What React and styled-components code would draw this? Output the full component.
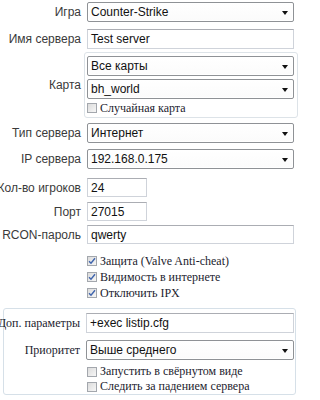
import React from 'react';
import styled, { createGlobalStyle } from 'styled-components';

const GlobalStyle = createGlobalStyle`
  html, body {
    margin: 0;
    padding: 0;
    background: #ffffff;
  }
  body {
    font-family: 'Liberation Sans', Arial, sans-serif;
    font-size: 12px;
    color: #222;
    overflow: hidden;
  }
`;

const Page = styled.div`
  width: 302px;
  height: 400px;
  padding-top: 2px;
  box-sizing: border-box;
  background: #fff;
`;

const Row = styled.div`
  display: grid;
  grid-template-columns: ${(p) => p.$labelWidth || 81}px 1fr;
  column-gap: 6px;
  padding-right: ${(p) => (p.$inset ? 0 : 8)}px;
  margin-top: ${(p) => p.$gap || 0}px;
  min-height: ${(p) => p.$height || 0}px;
`;

const Label = styled.div`
  display: flex;
  justify-content: flex-end;
  align-items: center;
  white-space: nowrap;
  color: ${(p) => (p.$serif ? '#1c1c2e' : '#3a3a3a')};
  font-family: ${(p) =>
    p.$serif ? "'Liberation Serif', 'Times New Roman', serif" : "'Liberation Sans', Arial, sans-serif"};
  font-size: 12px;
`;

const Combo = styled.div`
  position: relative;
  height: 20px;
  box-sizing: border-box;
  border: 1px solid #8f9296;
  border-radius: 2px;
  background: linear-gradient(#ffffff, #fbfbfb);
  box-shadow: inset 0 0 0 1px #fff;
  display: flex;
  align-items: center;
  padding-left: 3px;
  color: #111;
  font-size: 12px;
`;

const Arrow = styled.span`
  position: absolute;
  right: 5px;
  top: 8px;
  width: 0;
  height: 0;
  border-left: 3.5px solid transparent;
  border-right: 3.5px solid transparent;
  border-top: 4px solid #111;
`;

const Input = styled.div`
  height: ${(p) => p.$height || 19}px;
  width: ${(p) => (p.$width ? `${p.$width}px` : 'auto')};
  box-sizing: border-box;
  border: 1px solid #cfd3da;
  border-top-color: #abadb3;
  background: #fff;
  display: flex;
  align-items: center;
  padding-left: 3px;
  color: #111;
  font-size: 12px;
`;

const MapGroup = styled.div`
  margin: 0 -4px 0 -3px;
  padding: 3px 3px 3px 2px;
  border: 1px solid #dde3e8;
  border-radius: 3px;
  display: flex;
  flex-direction: column;
  gap: 3px;
`;

const OptionsGroup = styled.div`
  margin: 7px 0 0 3px;
  width: 293px;
  box-sizing: border-box;
  padding: 4px 1px 0 0;
  border: 1px solid #d6e0e8;
  border-radius: 3px;
`;

const CheckRow = styled.div`
  display: flex;
  align-items: center;
  gap: 3px;
  height: ${(p) => p.$height || 16}px;
  margin-left: ${(p) => p.$indent || 0}px;
  font-family: 'Liberation Serif', 'Times New Roman', serif;
  font-size: 12px;
  color: #1c1c2e;
  white-space: nowrap;
`;

const Box = styled.span`
  width: 10px;
  height: 10px;
  box-sizing: border-box;
  border: 1px solid #a3a7ad;
  background: linear-gradient(135deg, #dcdcdc, #f6f6f6);
  display: flex;
  align-items: center;
  justify-content: center;
  flex: none;
`;

const CheckList = styled.div`
  margin-top: ${(p) => p.$gap || 0}px;
`;

const Check = ({ checked, children, indent, height }) => (
  <CheckRow $indent={indent} $height={height}>
    <Box>
      {checked && (
        <svg width="8" height="8" viewBox="0 0 8 8">
          <path d="M1 4.2 L3 6.3 L7 1.2" fill="none" stroke="#3f64ad" strokeWidth="1.4" />
        </svg>
      )}
    </Box>
    {children}
  </CheckRow>
);

const Select = ({ children }) => (
  <Combo>
    {children}
    <Arrow />
  </Combo>
);

export default function App() {
  return (
    <>
      <GlobalStyle />
      <Page>
        <Row>
          <Label>Игра</Label>
          <Select>Counter-Strike</Select>
        </Row>
        <Row $gap={7}>
          <Label>Имя сервера</Label>
          <Input $height={20}>Test server</Input>
        </Row>
        <Row $gap={3}>
          <Label>Карта</Label>
          <MapGroup>
            <Select>Все карты</Select>
            <Select>bh_world</Select>
            <Check height={12}>Случайная карта</Check>
          </MapGroup>
        </Row>
        <Row $gap={5}>
          <Label>Тип сервера</Label>
          <Select>Интернет</Select>
        </Row>
        <Row $gap={6}>
          <Label>IP сервера</Label>
          <Select>192.168.0.175</Select>
        </Row>
        <Row $gap={9}>
          <Label>Кол-во игроков</Label>
          <Input $width={60}>24</Input>
        </Row>
        <Row $gap={5}>
          <Label>Порт</Label>
          <Input $width={60}>27015</Input>
        </Row>
        <Row $gap={4}>
          <Label>RCON-пароль</Label>
          <Input>qwerty</Input>
        </Row>
        <CheckList $gap={9}>
          <Check checked indent={87}>Защита (Valve Anti-cheat)</Check>
          <Check checked indent={87}>Видимость в интернете</Check>
          <Check checked indent={87}>Отключить IPX</Check>
        </CheckList>
        <OptionsGroup>
          <Row $labelWidth={76} $inset>
            <Label $serif>Доп. параметры</Label>
            <Input $height={20}>+exec listip.cfg</Input>
          </Row>
          <Row $labelWidth={76} $inset $gap={7}>
            <Label $serif>Приоритет</Label>
            <Select>Выше среднего</Select>
          </Row>
          <CheckList $gap={4}>
            <Check indent={83} height={15}>Запустить в свёрнутом виде</Check>
            <Check indent={83} height={15}>Следить за падением сервера</Check>
          </CheckList>
        </OptionsGroup>
      </Page>
    </>
  );
}
